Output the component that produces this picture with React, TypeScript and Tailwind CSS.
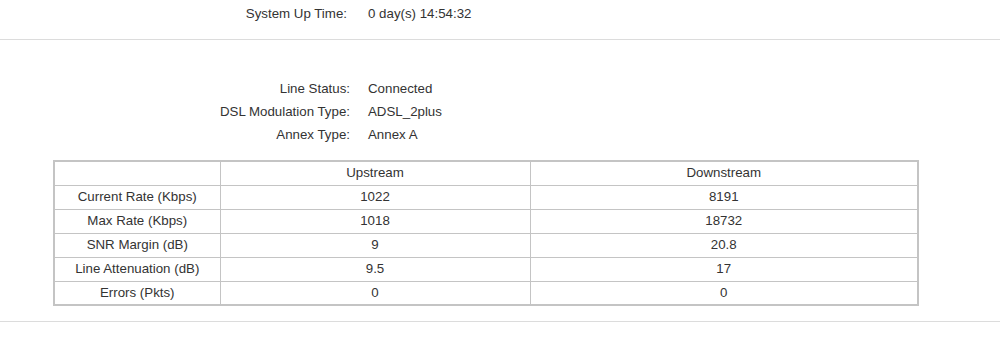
import React from "react";

const rows: [string, string, string][] = [
  ["Current Rate (Kbps)", "1022", "8191"],
  ["Max Rate (Kbps)", "1018", "18732"],
  ["SNR Margin (dB)", "9", "20.8"],
  ["Line Attenuation (dB)", "9.5", "17"],
  ["Errors (Pkts)", "0", "0"],
];

const info: [string, string][] = [
  ["Line Status:", "Connected"],
  ["DSL Modulation Type:", "ADSL_2plus"],
  ["Annex Type:", "Annex A"],
];

export default function App() {
  return (
    <div
      className="w-[1000px] h-[357px] bg-white text-[13.3px] text-[#333333] overflow-hidden"
      style={{ fontFamily: '"Liberation Sans", Arial, sans-serif' }}
    >
      <div className="flex h-[39px] pt-[6px] leading-[16px]">
        <div className="w-[347px] text-right">System Up Time:</div>
        <div className="pl-[21px]">0 day(s) 14:54:32</div>
      </div>
      <div className="border-t border-[#dcdcdc]" />
      <div className="mt-[37px] flex flex-col">
        {info.map(([k, v]) => (
          <div key={k} className="flex h-[23px] items-center leading-[16px]">
            <div className="w-[350px] text-right">{k}</div>
            <div className="pl-[18px]">{v}</div>
          </div>
        ))}
      </div>
      <div className="mt-[14px] pl-[53px]">
        <table className="border-collapse border-2 border-[#c4c4c4] text-center leading-[16px]">
          <thead>
            <tr>
              <td className="w-[166px] h-[24px] p-0 border border-[#c4c4c4]"></td>
              <td className="w-[310px] h-[24px] p-0 border border-[#c4c4c4]">Upstream</td>
              <td className="w-[388px] h-[24px] p-0 border border-[#c4c4c4]">Downstream</td>
            </tr>
          </thead>
          <tbody>
            {rows.map(([a, b, c]) => (
              <tr key={a}>
                <td className="h-[24px] p-0 border border-[#c4c4c4]">{a}</td>
                <td className="h-[24px] p-0 border border-[#c4c4c4]">{b}</td>
                <td className="h-[24px] p-0 border border-[#c4c4c4]">{c}</td>
              </tr>
            ))}
          </tbody>
        </table>
      </div>
      <div className="mt-[15px] border-t border-[#dcdcdc]" />
    </div>
  );
}
